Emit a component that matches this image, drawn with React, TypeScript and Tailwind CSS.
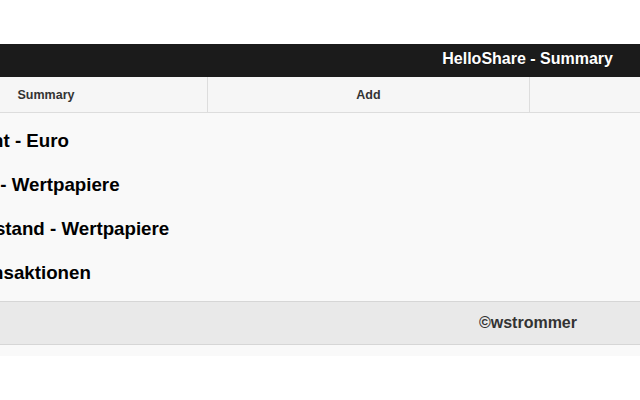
import React from 'react';

const headings = [
  { text: 'Investment - Euro', indent: '-ml-[89px]' },
  { text: 'Aktien - Wertpapiere', indent: '-ml-[62px]' },
  { text: 'Bestand - Wertpapiere', indent: '-ml-[29px]' },
  { text: 'Transaktionen', indent: '-ml-[36px]' },
];

export default function App() {
  return (
    <div
      className="w-[640px] h-[400px] overflow-hidden bg-white text-[#333]"
      style={{ fontFamily: '"Liberation Sans", Arial, sans-serif' }}
    >
      <div className="pt-[44px]">
        {/* Header */}
        <div className="h-[33px] bg-[#1b1b1b] flex justify-end pr-[27px] pt-[5px]">
          <h1 className="text-white text-[16px] font-bold leading-[20px] [text-shadow:0_1px_0_#111]">
            HelloShare - Summary
          </h1>
        </div>

        {/* Navbar */}
        <div className="overflow-hidden bg-[#f6f6f6] border-b border-[#dddddd]">
          <div className="flex w-[966px] -ml-[115px] h-[35px]">
            <div className="w-[322px] flex items-center justify-center text-[12.5px] font-bold pt-[1px]">Summary</div>
            <div className="w-[322px] flex items-center justify-center text-[12.5px] font-bold pt-[1px] border-l border-[#dddddd]">Add</div>
            <div className="w-[322px] flex items-center justify-center text-[12.5px] font-bold pt-[1px] border-l border-[#dddddd]">Settings</div>
          </div>
        </div>

        {/* Content */}
        <div className="bg-[#f9f9f9] pt-[17px] pb-[17px] overflow-hidden">
          <div className="flex flex-col gap-[22px]">
            {headings.map((h) => (
              <h2 key={h.text} className={`${h.indent} text-black text-[18.72px] font-bold leading-[22px] whitespace-nowrap`}>
                {h.text}
              </h2>
            ))}
          </div>
        </div>

        {/* Footer */}
        <div className="h-[44px] bg-[#e9e9e9] border-y border-[#d6d6d6] flex items-center justify-end pr-[63px]">
          <span className="text-[16px] font-bold">©wstrommer</span>
        </div>
        <div className="h-[11px] bg-[#f9f9f9]" />
      </div>
    </div>
  );
}
